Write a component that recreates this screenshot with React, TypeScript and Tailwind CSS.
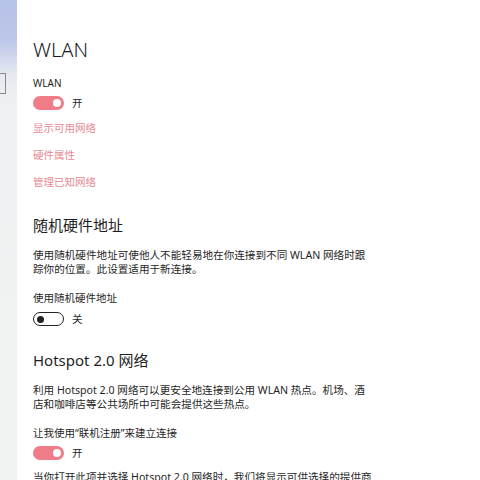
import React from "react";

const font = { fontFamily: '"Noto Sans", "Noto Sans CJK SC", sans-serif' };

function Toggle({ on }: { on: boolean }) {
  if (on) {
    return (
      <div className="flex h-[14px] w-[31px] items-center justify-end rounded-full bg-[#ef7c87] pr-[3px]">
        <div className="h-[8px] w-[8px] rounded-full bg-white" />
      </div>
    );
  }
  return (
    <div className="flex h-[14px] w-[31px] items-center justify-start rounded-full border-[1.5px] border-[#222] pl-[2.5px]">
      <div className="h-[7px] w-[7px] rounded-full bg-[#222]" />
    </div>
  );
}

function ToggleRow({ on, label, mt }: { on: boolean; label: string; mt: string }) {
  return (
    <div className={`flex items-center gap-[8px] ${mt}`}>
      <Toggle on={on} />
      <span className="text-[10.5px] leading-[14px] text-[#1f1f1f]">{label}</span>
    </div>
  );
}

export default function App() {
  return (
    <div className="flex h-[480px] w-[480px] overflow-hidden bg-white" style={font}>
      <div className="h-full w-[17px] shrink-0 bg-[linear-gradient(to_bottom,#b6c2e6_0px,#bcc7e9_40px,#e6e9f1_75px,#eff0f1_100px,#f1f2f2_480px)]">
        <div className="mt-[73px] h-[21px] w-[6px] border border-l-0 border-[#8a8a8a]" />
      </div>
      <div className="flex-1 pl-[16px] pt-[36px] text-[#1f1f1f]">
        <div className="text-[20px] font-light leading-[28px] text-[#1a1a1a]">WLAN</div>
        <div className="mt-[12px] text-[10px] leading-[14px]">WLAN</div>
        <ToggleRow on={true} label="开" mt="mt-[6px]" />
        <div className="mt-[11px] text-[10.5px] leading-[14px] text-[#e68a95]">显示可用网络</div>
        <div className="mt-[13px] text-[10.5px] leading-[14px] text-[#e68a95]">硬件属性</div>
        <div className="mt-[13px] text-[10.5px] leading-[14px] text-[#e68a95]">管理已知网络</div>
        <div className="mt-[26px] text-[15px] leading-[20px]">随机硬件地址</div>
        <div className="mt-[14px] whitespace-nowrap text-[10.6px] leading-[13.5px]">
          使用随机硬件地址可使他人不能轻易地在你连接到不同 WLAN 网络时跟
          <br />
          踪你的位置。此设置适用于新连接。
        </div>
        <div className="mt-[15px] text-[10.5px] leading-[14px]">使用随机硬件地址</div>
        <ToggleRow on={false} label="关" mt="mt-[7px]" />
        <div className="mt-[24px] text-[15px] leading-[20px]">Hotspot 2.0 网络</div>
        <div className="mt-[13px] whitespace-nowrap text-[10.6px] leading-[14px]">
          利用 Hotspot 2.0 网络可以更安全地连接到公用 WLAN 热点。机场、酒
          <br />
          店和咖啡店等公共场所中可能会提供这些热点。
        </div>
        <div className="mt-[15px] text-[10.5px] leading-[14px]">让我使用“联机注册”来建立连接</div>
        <ToggleRow on={true} label="开" mt="mt-[6px]" />
        <div className="mt-[10px] whitespace-nowrap text-[10.6px] leading-[14px]">
          当你打开此项并选择 Hotspot 2.0 网络时，我们将显示可供选择的提供商
        </div>
      </div>
    </div>
  );
}
